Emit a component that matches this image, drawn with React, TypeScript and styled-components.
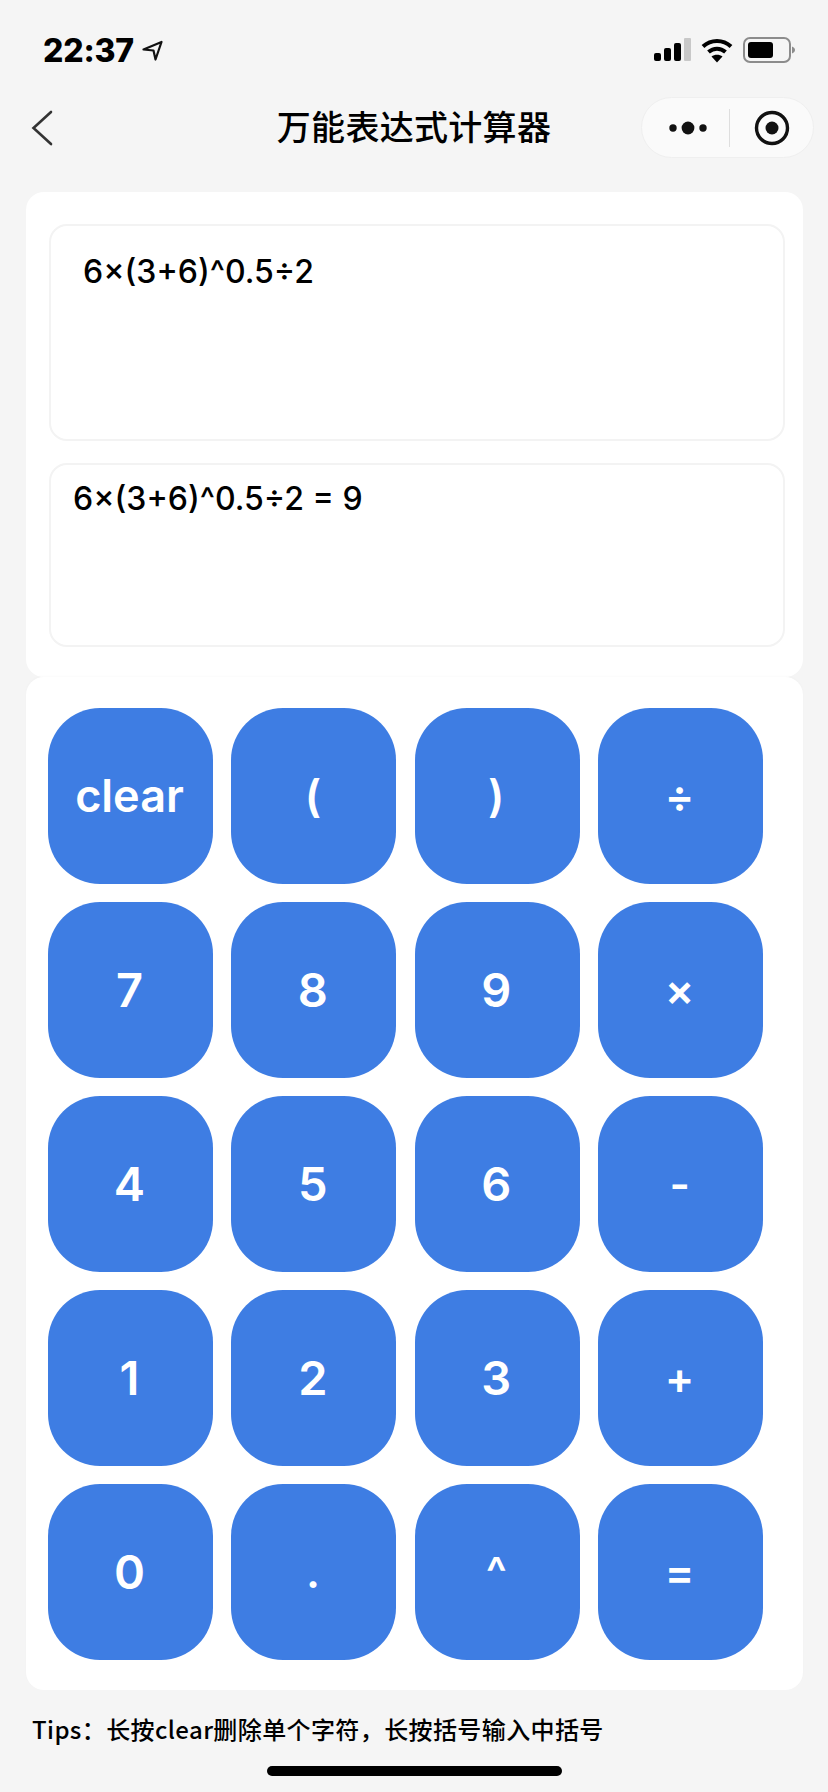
import { createGlobalStyle, styled } from "styled-components";

const GlobalStyle = createGlobalStyle`
  html, body {
    margin: 0;
    padding: 0;
    background: #f5f5f5;
  }

  * {
    box-sizing: border-box;
  }
`;

const Page = styled.div`
  width: 828px;
  height: 1792px;

  display: flex;
  flex-direction: column;

  overflow: hidden;
  background: #f5f5f5;
  color: #000;
  font-family: Inter, "Noto Sans CJK SC", sans-serif;
`;

const StatusBar = styled.div`
  height: 97px;
  padding: 31px 33px 0 43px;

  display: flex;
  justify-content: space-between;
  align-items: flex-start;
`;

const TimeGroup = styled.div`
  height: 38px;

  display: flex;
  align-items: center;
  gap: 8px;
`;

const Time = styled.span`
  font-size: 32px;
  font-weight: 800;
  letter-spacing: -0.2px;
`;

const StatusIcons = styled.div`
  height: 38px;

  display: flex;
  align-items: center;
  gap: 10px;
`;

const NavBar = styled.div`
  height: 61px;
  padding: 0 15px;

  display: grid;
  grid-template-columns: 1fr auto 1fr;
  align-items: center;
`;

const BackButton = styled.div`
  margin-left: 16px;

  display: flex;
`;

const Title = styled.h1`
  margin: 0;
  padding-bottom: 4px;

  font-family: "Noto Sans CJK SC", sans-serif;
  font-size: 34px;
  font-weight: 500;
  line-height: 57px;
  letter-spacing: 0.3px;
`;

const Capsule = styled.div`
  width: 173px;
  height: 61px;
  justify-self: end;
  margin-right: -1px;

  display: flex;
  align-items: center;

  background: #fafafa;
  border: 1px solid #efefef;
  border-radius: 31px;
`;

const CapsulePart = styled.div<{ $shift: number }>`
  flex: 1;
  padding-left: ${({ $shift }) => $shift}px;

  display: flex;
  justify-content: center;
`;

const CapsuleDivider = styled.div`
  width: 1px;
  height: 38px;

  background: #dedede;
`;

const DisplayCard = styled.section`
  height: 485px;
  margin: 34px 25px 0 26px;
  padding: 32px 18px 0 23px;

  display: flex;
  flex-direction: column;
  gap: 22px;

  background: #fff;
  border-radius: 18px;
`;

const DisplayBox = styled.div<{ $height: number; $indent: number; $top: number }>`
  height: ${({ $height }) => $height}px;
  padding: ${({ $top }) => $top}px 0 0 ${({ $indent }) => $indent}px;

  background: #fff;
  border: 2px solid #f3f3f3;
  border-radius: 18px;

  font-size: 32px;
  font-weight: 500;
  line-height: 38px;
`;

const KeypadCard = styled.section`
  height: 1013px;
  margin: 0 25px 0 26px;
  padding: 31px 22px 0;

  background: #fff;
  border-radius: 18px;
  box-shadow: 0 -1px 3px rgba(0, 0, 0, 0.02);
`;

const KeyGrid = styled.div`
  display: grid;
  grid-template-columns: repeat(4, 165px);
  grid-auto-rows: 175.5px;
  column-gap: 18.4px;
  row-gap: 18.5px;
`;

const Key = styled.button<{ $size: number }>`
  padding: 0 2px 0 0;

  display: flex;
  justify-content: center;
  align-items: center;

  background: #3e7de3;
  border: none;
  border-radius: 52px;
  color: #fff;

  font-family: Inter, sans-serif;
  font-size: ${({ $size }) => $size}px;
  font-weight: 600;
`;

const Tips = styled.p`
  margin: 24px 0 0 32px;

  font-family: "Noto Sans CJK SC", sans-serif;
  font-size: 24px;
  font-weight: 500;
  line-height: 30px;
  letter-spacing: 0.4px;
`;

const HomeBar = styled.div`
  width: 295px;
  height: 10px;
  margin: 22px auto 0;

  background: #000;
  border-radius: 5px;
`;

const KEYS = ["clear", "(", ")", "÷", "7", "8", "9", "×", "4", "5", "6", "-", "1", "2", "3", "+", "0", ".", "^", "="];

const keySize = (key: string) => {
  if (key === "clear") return 45;
  return /[0-9]/.test(key) ? 47 : 44;
};

function LocationArrow() {
  return (
    <svg width="21" height="21" viewBox="0 0 21 21" fill="none" stroke="#111" strokeWidth="2.2" strokeLinejoin="round">
      <path d="M1.5 9.5 19.5 2 13.5 19.5 11.5 10.5Z" />
    </svg>
  );
}

function SignalIcon() {
  return (
    <svg width="37" height="24" viewBox="0 0 37 24">
      <rect x="0" y="15" width="7" height="8" rx="2" fill="#000" />
      <rect x="10" y="10" width="7" height="13" rx="2" fill="#000" />
      <rect x="20" y="5" width="7" height="18" rx="2" fill="#000" />
      <rect x="30" y="0" width="7" height="23" rx="1" fill="#c8c8c8" />
    </svg>
  );
}

function WifiIcon() {
  return (
    <svg width="32" height="25" viewBox="0 0 32 25" fill="none" stroke="#000" strokeWidth="4">
      <path d="M2 8.5C10 1 22 1 30 8.5" />
      <path d="M7.5 14C12.5 9.5 19.5 9.5 24.5 14" />
      <path d="M16 24.5 10.5 18.5C13.5 16 18.5 16 21.5 18.5Z" fill="#000" stroke="none" />
    </svg>
  );
}

function BatteryIcon() {
  return (
    <svg width="52" height="26" viewBox="0 0 52 26">
      <rect x="1" y="1" width="46" height="24" rx="6" fill="none" stroke="#8c8c8c" strokeWidth="2" />
      <rect x="5" y="5" width="25" height="16" rx="3" fill="#000" />
      <path d="M49 9.5C51 10.5 52 11.5 52 13C52 14.5 51 15.5 49 16.5Z" fill="#8c8c8c" />
    </svg>
  );
}

function BackIcon() {
  return (
    <svg width="22" height="36" viewBox="0 0 22 36" fill="none" stroke="#333" strokeWidth="2.6" strokeLinecap="round">
      <path d="M20 2 2.5 18 20 34" />
    </svg>
  );
}

function MoreIcon() {
  return (
    <svg width="38" height="14" viewBox="0 0 38 14" fill="#111">
      <circle cx="4" cy="7" r="3.7" />
      <circle cx="19" cy="7" r="6.4" />
      <circle cx="34" cy="7" r="3.7" />
    </svg>
  );
}

function TargetIcon() {
  return (
    <svg width="36" height="36" viewBox="0 0 36 36">
      <circle cx="18" cy="18" r="15.5" fill="none" stroke="#111" strokeWidth="3.4" />
      <circle cx="18" cy="18" r="6.5" fill="#111" />
    </svg>
  );
}

export default function App() {
  return (
    <Page>
      <GlobalStyle />
      <StatusBar>
        <TimeGroup>
          <Time>22:37</Time>
          <LocationArrow />
        </TimeGroup>
        <StatusIcons>
          <SignalIcon />
          <WifiIcon />
          <BatteryIcon />
        </StatusIcons>
      </StatusBar>

      <NavBar>
        <BackButton>
          <BackIcon />
        </BackButton>
        <Title>万能表达式计算器</Title>
        <Capsule>
          <CapsulePart $shift={4}>
            <MoreIcon />
          </CapsulePart>
          <CapsuleDivider />
          <CapsulePart $shift={0}>
            <TargetIcon />
          </CapsulePart>
        </Capsule>
      </NavBar>

      <DisplayCard>
        <DisplayBox $height={217} $indent={32} $top={27}>
          6×(3+6)^0.5÷2
        </DisplayBox>
        <DisplayBox $height={184} $indent={22} $top={15}>
          6×(3+6)^0.5÷2 = 9
        </DisplayBox>
      </DisplayCard>

      <KeypadCard>
        <KeyGrid>
          {KEYS.map((key) => (
            <Key key={key} $size={keySize(key)}>
              {key}
            </Key>
          ))}
        </KeyGrid>
      </KeypadCard>

      <Tips>{"Tips\uFF1A长按clear删除单个字符\uFF0C长按括号输入中括号"}</Tips>
      <HomeBar />
    </Page>
  );
}
